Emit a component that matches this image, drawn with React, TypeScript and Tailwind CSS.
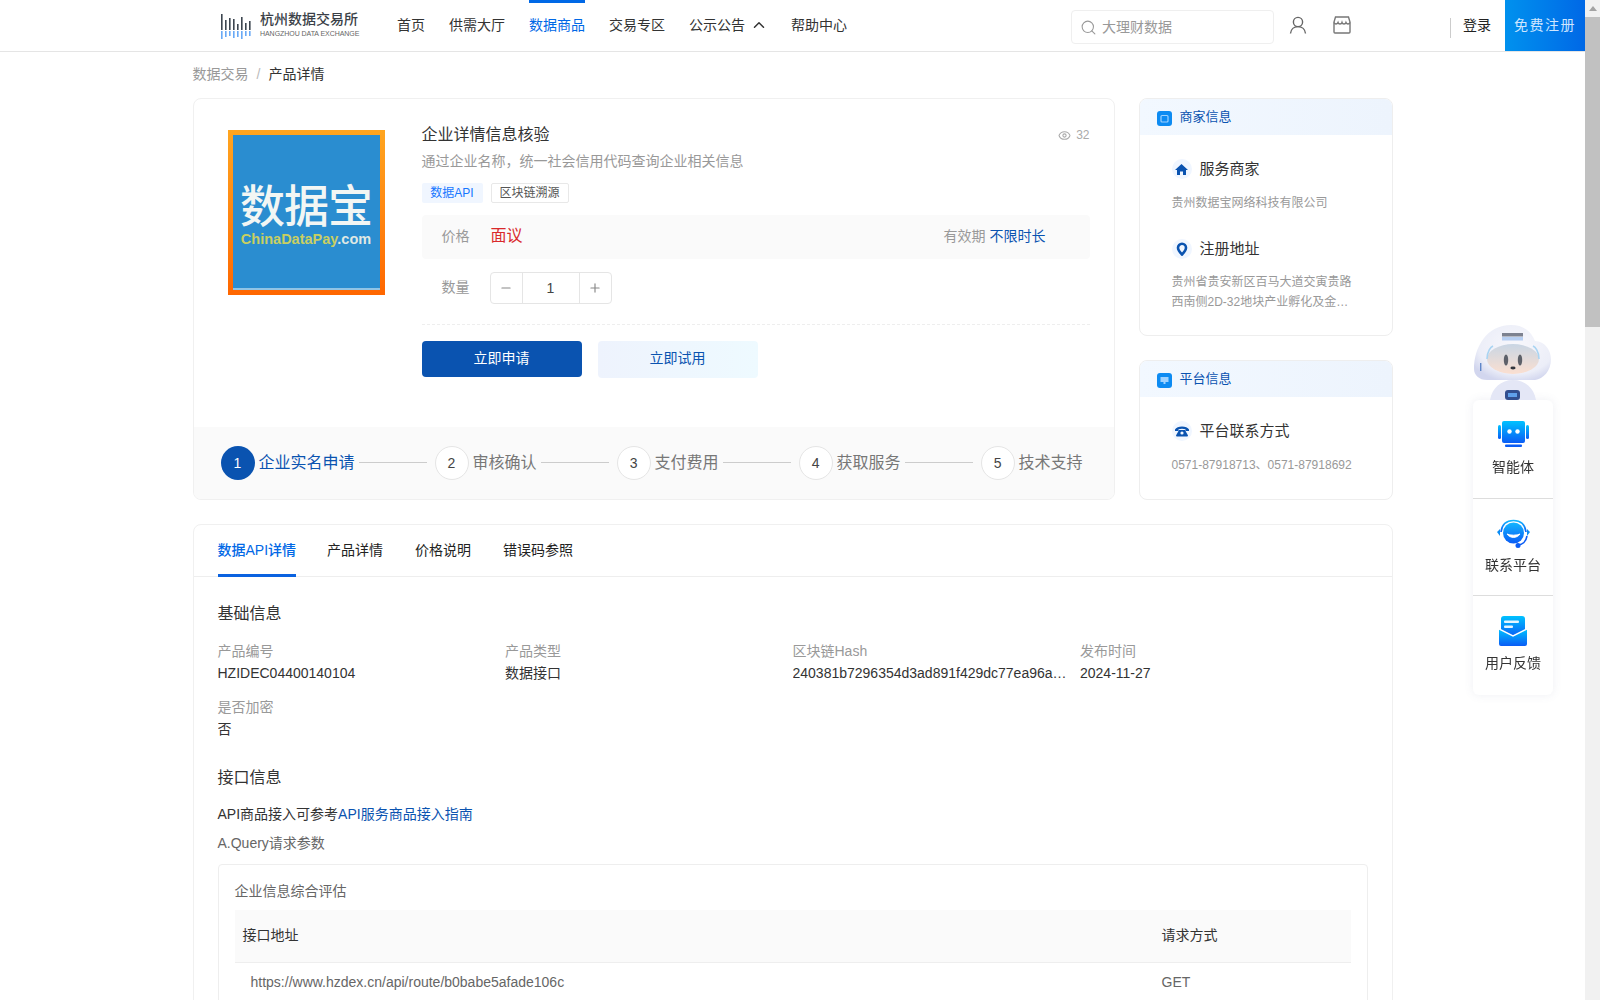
import { ChevronUp, Search, Minus, Plus, Eye } from "lucide-react";

const font = "font-['Liberation_Sans','Noto_Sans_CJK_SC',sans-serif]";

const navItems = ["首页", "供需大厅", "数据商品", "交易专区", "公示公告", "帮助中心"];
const tabs = ["数据API详情", "产品详情", "价格说明", "错误码参照"];
const steps = ["企业实名申请", "审核确认", "支付费用", "获取服务", "技术支持"];

const Logo = () => (
  <div className="flex items-center gap-[4px] w-[137px]">
    <svg width="36" height="28" viewBox="0 0 36 28" className="shrink-0">
      {[
        [1, 2, 16, 8],
        [5, 8, 10, 6],
        [9, 6, 12, 5],
        [13, 7, 11, 7],
        [17, 12, 6, 6],
        [21, 5, 13, 8],
        [25, 11, 7, 5],
        [29, 9, 9, 5],
      ].map(([x, y, h, d]) => (
        <g key={x}>
          <rect x={x} y={y} width="1.6" height={h} fill="#3d4650" />
          <rect x={x} y={y + h + 1} width="1.6" height={d} fill="#69a9f5" />
        </g>
      ))}
    </svg>
    <div className="flex flex-col">
      <span className="text-[14px] leading-[15px] font-medium text-[#3a3f47] whitespace-nowrap">杭州数据交易所</span>
      <span className="text-[7px] leading-[10px] mt-[2px] tracking-[-0.05px] text-[#666] whitespace-nowrap">HANGZHOU DATA EXCHANGE</span>
    </div>
  </div>
);

const Header = () => (
  <header className="flex h-[52px] shrink-0 items-stretch border-b border-[#e5e5e5] bg-white pl-[220px]">
    <Logo />
    <nav className="ml-10 flex items-stretch gap-6 text-sm text-[#333]">
      {navItems.map((n) => (
        <div
          key={n}
          className={`flex items-center border-t-[3px] pb-[5px] ${
            n === "数据商品" ? "border-[#0068e6] text-[#0068e6]" : "border-transparent"
          }`}
        >
          {n}
          {n === "公示公告" && <ChevronUp className="ml-[5px] mr-[-1px] size-[18px]" strokeWidth={2} />}
        </div>
      ))}
    </nav>
    <div className="ml-[224px] mt-[10px] flex h-[34px] w-[203px] items-center rounded-[4px] border border-[#efefef] pl-2 text-sm text-[#999]">
      <Search className="size-[17px] text-[#999]" strokeWidth={1.5} />
      <span className="ml-[5px]">大理财数据</span>
    </div>
    <div className="ml-[15px] flex items-center pb-[2px]">
      <svg width="18" height="18" viewBox="0 0 18 18" fill="none" stroke="#666" strokeWidth="1.4">
        <circle cx="9" cy="6" r="4.6" />
        <path d="M1.5 17.5c.4-4.2 3.4-6.9 7.5-6.9s7.1 2.7 7.5 6.9" />
      </svg>
    </div>
    <div className="ml-[26px] flex items-center pb-[2px]">
      <svg width="18" height="18" viewBox="0 0 18 18" fill="none" stroke="#777" strokeWidth="1.4">
        <path d="M2.5 1h13l1.5 5v10a1 1 0 0 1-1 1H2a1 1 0 0 1-1-1V6z" />
        <path d="M1 6.5c1 2 3 2 4 0 .6 2 3.4 2 4 0 .6 2 3.4 2 4 0 1 2 3 2 4 0" />
      </svg>
    </div>
    <div className="ml-auto flex items-stretch">
      <div className="mt-[18px] h-5 w-[1.5px] bg-[#ccc]" />
      <div className="ml-3 flex items-center pb-[2px] text-sm text-[#222]">登录</div>
      <div className="ml-[14px] flex w-20 items-center justify-center bg-gradient-to-r from-[#0091ee] to-[#0068e6] pb-[2px] text-sm tracking-[1.5px] text-[#cfe6ff]">
        免费注册
      </div>
    </div>
  </header>
);

const ProductLogo = () => (
  <div className="flex h-[165px] w-[157px] shrink-0 bg-gradient-to-b from-[#ffa51f] to-[#ff6600] p-[5px]">
    <div className="flex flex-1 flex-col items-center border-b-[2px] border-[#8fc4e6] bg-[#2a8dd0] pt-[51px]">
      <span className="text-[45px] leading-[44px] font-medium text-[#f2f6f4] tracking-[-1px] whitespace-nowrap">数据宝</span>
      <span className="text-[14.5px] leading-[18px] font-bold text-[#c9cf62] whitespace-nowrap">
        ChinaDataPay<span className="text-[#dfe8e4]">.com</span>
      </span>
    </div>
  </div>
);

const ProductCard = () => (
  <div className="flex h-[402px] w-[922px] shrink-0 flex-col overflow-hidden rounded-lg border border-[#f0f0f0] bg-white">
    <div className="flex flex-1 pl-[34px] pr-6 pt-[31px]">
      <ProductLogo />
      <div className="ml-[37px] flex-1">
        <div className="flex items-center justify-between h-[22px] -mt-[6px]">
          <span className="text-base text-[#333]">企业详情信息核验</span>
          <span className="flex items-center gap-[5px] text-xs text-[#aaa]">
            <Eye className="size-[13px]" strokeWidth={2} />
            32
          </span>
        </div>
        <p className="mt-[4px] text-sm leading-[22px] text-[#999]">通过企业名称，统一社会信用代码查询企业相关信息</p>
        <div className="mt-[11px] flex gap-2 text-xs">
          <span className="flex h-5 w-[61px] items-center justify-center rounded-[2px] bg-[#f0f6ff] text-[#1677ff]">数据API</span>
          <span className="flex h-5 w-[78px] items-center justify-center rounded-[2px] border border-[#e8e8e8] text-[#555]">区块链溯源</span>
        </div>
        <div className="mt-[12px] flex h-11 items-center rounded bg-[#fafafa] pb-[2px] pl-5 text-sm text-[#999]">
          <span className="w-[49px]">价格</span>
          <span className="text-base text-[#d9292b]">面议</span>
          <span className="ml-[421px]">有效期</span>
          <span className="ml-[4px] text-[#0a53b0]">不限时长</span>
        </div>
        <div className="mt-[13px] flex items-center pl-5 text-sm text-[#999]">
          <span className="-mt-[2px] w-[48px]">数量</span>
          <div className="flex h-8 w-[122px] items-stretch rounded border border-[#e5e5e5] text-[#555]">
            <span className="flex w-[31px] items-center justify-center">
              <Minus className="size-[14px] text-[#888]" strokeWidth={2} />
            </span>
            <span className="flex flex-1 items-center justify-center border-x border-[#e5e5e5] text-[#444]">1</span>
            <span className="flex w-[31px] items-center justify-center">
              <Plus className="size-[14px] text-[#888]" strokeWidth={2} />
            </span>
          </div>
        </div>
        <div className="mt-[20px] border-t border-dashed border-[#eee]" />
        <div className="mt-4 flex gap-4 text-sm">
          <button className="h-9 w-40 rounded bg-[#0a53b0] pb-[2px] text-white">立即申请</button>
          <button className="h-[37px] w-40 rounded bg-gradient-to-r from-[#eef3fd] to-[#eefaff] pb-[3px] text-[#0a53b0]">立即试用</button>
        </div>
      </div>
    </div>
    <div className="flex h-[72px] shrink-0 items-center bg-[#fafafa] pl-[27px] pb-[1px] text-base">
      {steps.map((s, i) => (
        <div key={s} className="flex items-center">
          <span
            className={`flex size-[34px] items-center justify-center rounded-full text-sm ${
              i === 0 ? "bg-[#0a53b0] text-white" : "border border-[#e5e5e5] bg-white text-[#444]"
            }`}
          >
            {i + 1}
          </span>
          <span className={`ml-1 ${i === 0 ? "text-[#0a53b0]" : "text-[#777]"}`}>{s}</span>
          {i < steps.length - 1 && <span className="ml-1 mr-2 h-px w-[68px] bg-[#ccc]" />}
        </div>
      ))}
    </div>
  </div>
);

const CardHead = ({ title, kind }: { title: string; kind: "shop" | "screen" }) => (
  <div className="flex h-[36px] items-center bg-gradient-to-r from-[#f2f8ff] to-[#edf4fd] pl-[17px] text-[13px] text-[#0a53b0]">
    <svg width="15" height="15" viewBox="0 0 15 15" className="mt-[2px]">
      <rect width="15" height="15" rx="3" fill="#0d8bf2" />
      {kind === "shop" ? (
        <rect x="4" y="4.5" width="7" height="6.5" rx="1" fill="none" stroke="#9fd2ff" strokeWidth="1.2" />
      ) : (
        <path d="M3.5 4h8v5h-3v2h-2V9h-3z" fill="#9fd2ff" />
      )}
    </svg>
    <span className="ml-[8px] pb-[1px]">{title}</span>
  </div>
);

const InfoIcon = ({ children }: { children: React.ReactNode }) => (
  <span className="flex size-5 items-center justify-center rounded-full bg-[#f0f6ff]">{children}</span>
);

const InfoRow = ({ icon, label, children }: { icon: React.ReactNode; label: string; children: React.ReactNode }) => (
  <div>
    <div className="flex items-center">
      <InfoIcon>{icon}</InfoIcon>
      <span className="ml-2 text-[15px] text-[#333]">{label}</span>
    </div>
    <div className="mt-[12px] text-xs leading-5 text-[#999]">{children}</div>
  </div>
);

const SideCards = () => (
  <div className="ml-[24px] flex w-[254px] flex-col gap-[24px]">
    <div className="h-[238px] overflow-hidden rounded-lg border border-[#eee] bg-white">
      <CardHead title="商家信息" kind="shop" />
      <div className="flex flex-col gap-[25px] pl-[32px] pt-[23px]">
        <InfoRow
          label="服务商家"
          icon={
            <svg width="13" height="13" viewBox="0 0 13 13" fill="#0a53b0">
              <path d="M6.5 1 13 7h-2v5H8V8.5H5V12H2V7H0z" />
            </svg>
          }
        >
          贵州数据宝网络科技有限公司
        </InfoRow>
        <InfoRow
          label="注册地址"
          icon={
            <svg width="12" height="14" viewBox="0 0 12 14" fill="none" stroke="#0a53b0" strokeWidth="2.6">
              <path d="M6 12.5C3 9.5 2 7.8 2 5.8a4 4 0 0 1 8 0c0 2-1 3.7-4 6.7z" />
            </svg>
          }
        >
          <div className="line-clamp-2 w-[183px]">贵州省贵安新区百马大道交寅贵路西南侧2D-32地块产业孵化及金融中心大楼</div>
        </InfoRow>
      </div>
    </div>
    <div className="flex-1 overflow-hidden rounded-lg border border-[#eee] bg-white">
      <CardHead title="平台信息" kind="screen" />
      <div className="pl-[32px] pt-[23px]">
        <InfoRow
          label="平台联系方式"
          icon={
            <svg width="14" height="12" viewBox="0 0 14 12" fill="#0a53b0">
              <path d="M0 4.5C2 .5 12 .5 14 4.5V6h-3.5V4.2c-2-.7-5-.7-7 0V6H0z" />
              <path d="M4 5h6l3 5.5a1 1 0 0 1-1 1H2a1 1 0 0 1-1-1z" />
              <circle cx="7" cy="8" r="1.6" fill="#f0f6ff" />
            </svg>
          }
        >
          <span className="whitespace-nowrap">0571-87918713、0571-87918692</span>
        </InfoRow>
      </div>
    </div>
  </div>
);

const Field = ({ label, value }: { label: string; value: string }) => (
  <div className="min-w-0 pr-3 leading-[22px]">
    <div className="text-[#999]">{label}</div>
    <div className="truncate text-[#333]">{value}</div>
  </div>
);

const DetailCard = () => (
  <div className="mt-[24px] rounded-t-lg border border-[#f0f0f0] bg-white">
    <div className="flex h-[52px] gap-8 border-b border-[#eee] px-6 pt-px text-sm text-[#222]">
      {tabs.map((t, i) => (
        <div
          key={t}
          className={`-mb-px flex items-center border-b-[3px] ${i === 0 ? "-mr-px border-[#0a62e0] font-medium text-[#0068e6]" : "border-transparent"}`}
        >
          {t}
        </div>
      ))}
    </div>
    <div className="px-6 text-sm">
      <h3 className="mt-[25px] text-base leading-[24px] text-[#333]">基础信息</h3>
      <div className="mt-[14px] grid grid-cols-4 gap-y-[12px]">
        <Field label="产品编号" value="HZIDEC04400140104" />
        <Field label="产品类型" value="数据接口" />
        <Field label="区块链Hash" value="240381b7296354d3ad891f429dc77ea96a5c1f08e2b74d6093" />
        <Field label="发布时间" value="2024-11-27" />
        <Field label="是否加密" value="否" />
      </div>
      <h3 className="mt-[26px] text-base leading-[24px] text-[#333]">接口信息</h3>
      <p className="mt-[13px] leading-[22px] text-[#333]">
        API商品接入可参考<span className="text-[#0a53b0]">API服务商品接入指南</span>
      </p>
      <p className="mt-[7px] leading-[22px] text-[#666]">A.Query请求参数</p>
      <div className="mt-[10px] rounded border border-[#eee] px-4 pb-4">
        <div className="pt-[15px] leading-[22px] text-[#666]">企业信息综合评估</div>
        <div className="mt-[8px] flex h-[52px] items-center bg-[#fafafa] pb-[2px] pl-2 text-[#333]">
          <span className="w-[919px]">接口地址</span>
          <span>请求方式</span>
        </div>
        <div className="flex h-[38px] items-center border-t border-[#eee] pl-4 text-[#666]">
          <span className="w-[911px]">https://www.hzdex.cn/api/route/b0babe5afade106c</span>
          <span>GET</span>
        </div>
      </div>
    </div>
  </div>
);

const Robot = () => (
  <svg width="80" height="75" viewBox="0 -2 80 75" className="block">
    <defs>
      <radialGradient id="rb" cx="0.55" cy="0.4" r="0.65">
        <stop offset="0" stopColor="#f8f8fc" />
        <stop offset="0.75" stopColor="#eceef8" />
        <stop offset="1" stopColor="#d2d6ee" />
      </radialGradient>
      <linearGradient id="rf" x1="0" y1="0" x2="0" y2="1">
        <stop offset="0" stopColor="#c9d6e4" />
        <stop offset="1" stopColor="#fbdfd0" />
      </linearGradient>
      <filter id="soft">
        <feGaussianBlur stdDeviation="0.5" />
      </filter>
    </defs>
    <g filter="url(#soft)">
      <path d="M17 73c2-12 11-20 23-20s21 8 23 20z" fill="#e4e7f6" />
      <path d="M1 42C1 20 14-2 38-2c12 0 20 6 24 16 10 0 16 10 16 18 0 12-8 20-16 21H14C6 53 1 48 1 42z" fill="url(#rb)" />
      <ellipse cx="40" cy="32" rx="26" ry="15" fill="url(#rf)" />
      <path d="M14 32c0-8 4-12 6-13M66 32c0-8-4-12-6-13" stroke="#a9d4f2" strokeWidth="1.6" fill="none" />
      <ellipse cx="33" cy="33" rx="2.2" ry="5.5" fill="#5d6169" />
      <ellipse cx="47" cy="33" rx="2.2" ry="5.5" fill="#5d6169" />
      <ellipse cx="40" cy="41" rx="2.6" ry="1.4" fill="#33363d" />
      <rect x="29" y="6" width="21" height="3.5" fill="#7d8290" />
      <rect x="29" y="10" width="21" height="3.5" fill="#a8c6f0" opacity="0.8" />
      <rect x="7" y="36" width="1.4" height="8" fill="#5e86c9" />
      <rect x="32" y="63" width="15" height="10" rx="3" fill="#33508f" />
      <rect x="35" y="66" width="9" height="4" fill="#5fa0ea" />
    </g>
  </svg>
);

const FloatPanel = () => (
  <div className="fixed left-[1473px] top-[325px] w-20">
    <Robot />
    <div className="h-[295px] rounded-md bg-white shadow-[0_0_10px_rgba(90,100,140,0.1)] text-sm text-[#333]">
      <div className="flex h-[99px] flex-col items-center border-b border-[#ddd] pt-[21px]">
        <svg width="31" height="26" viewBox="0 0 31 26">
          <defs>
            <linearGradient id="fa" x1="0" y1="0" x2="0" y2="1">
              <stop offset="0" stopColor="#00c2ff" />
              <stop offset="1" stopColor="#0a5cf5" />
            </linearGradient>
          </defs>
          <rect x="0" y="4" width="3" height="14" rx="1.5" fill="url(#fa)" />
          <rect x="28" y="4" width="3" height="14" rx="1.5" fill="url(#fa)" />
          <rect x="4" y="0" width="23" height="22" rx="2" fill="url(#fa)" />
          <circle cx="11.5" cy="10.5" r="2.2" fill="#fff" />
          <circle cx="19.5" cy="10.5" r="2.2" fill="#fff" />
          <rect x="7" y="23.5" width="17" height="2.5" rx="1" fill="#0a5cf5" />
        </svg>
        <span className="mt-[9px] leading-[22px]">智能体</span>
      </div>
      <div className="flex h-[97px] flex-col items-center border-b border-[#ddd] pt-[20px]">
        <svg width="33" height="30" viewBox="0 0 33 30">
          <defs>
            <linearGradient id="fb" x1="0" y1="0" x2="0" y2="1">
              <stop offset="0" stopColor="#12b6ff" />
              <stop offset="1" stopColor="#0a5cf5" />
            </linearGradient>
          </defs>
          <path d="M4 13C5 5 10 1.5 16.5 1.5S28 5 29 13" fill="none" stroke="url(#fb)" strokeWidth="1.6" />
          <circle cx="16.5" cy="14" r="10.5" fill="url(#fb)" />
          <path d="M10 15c3 4.5 10 4.5 13 0-3 1.6-10 1.6-13 0z" fill="#fff" stroke="#fff" strokeWidth="1" />
          <path d="M0 13l3-3v7zM33 13l-3-3v7z" fill="#0a8cf5" />
          <path d="M30 17c-1 6-5 9-9 9" fill="none" stroke="#0a5cf5" strokeWidth="1.6" />
          <circle cx="21" cy="26.5" r="2.5" fill="#0a5cf5" />
        </svg>
        <span className="mt-[5px] leading-[22px]">联系平台</span>
      </div>
      <div className="flex flex-col items-center pt-[20px]">
        <svg width="28" height="30" viewBox="0 0 28 30">
          <defs>
            <linearGradient id="fc" x1="0" y1="0" x2="0" y2="1">
              <stop offset="0" stopColor="#00c2ff" />
              <stop offset="1" stopColor="#0a5cf5" />
            </linearGradient>
          </defs>
          <path d="M2 3a3 3 0 0 1 3-3h18a3 3 0 0 1 3 3v12l-12 6-12-6z" fill="url(#fc)" />
          <rect x="5" y="4.5" width="15" height="2.5" rx="1" fill="#e6f6ff" />
          <rect x="5" y="9.5" width="9" height="2.5" rx="1" fill="#e6f6ff" />
          <path d="M0 13l14 7 14-7v15a2 2 0 0 1-2 2H2a2 2 0 0 1-2-2z" fill="url(#fc)" />
          <path d="M0 13l14 7 14-7" fill="none" stroke="#fff" strokeWidth="1.4" />
        </svg>
        <span className="mt-[6px] leading-[22px]">用户反馈</span>
      </div>
    </div>
  </div>
);

const FakeScrollbar = () => (
  <div className="flex h-screen w-[15px] shrink-0 flex-col bg-[#f1f1f1]">
    <div className="flex h-[17px] items-center justify-center">
      <span className="h-0 w-0 border-x-[4px] border-b-[5px] border-x-transparent border-b-[#a3a3a3]" />
    </div>
    <div className="h-[310px] bg-[#c1c1c1]" />
  </div>
);

export default function App() {
  return (
    <div className={`flex h-screen overflow-hidden bg-white ${font}`}>
      <div className="flex h-screen min-w-0 flex-1 flex-col overflow-hidden">
        <Header />
        <main className="mx-auto w-[1200px]">
          <div className="flex h-[46px] items-center gap-[8px] pb-[2px] text-sm">
            <span className="text-[#999]">数据交易</span>
            <span className="text-[#bbb]">/</span>
            <span className="text-[#333]">产品详情</span>
          </div>
          <div className="flex">
            <ProductCard />
            <SideCards />
          </div>
          <DetailCard />
        </main>
      </div>
      <FakeScrollbar />
      <FloatPanel />
    </div>
  );
}
